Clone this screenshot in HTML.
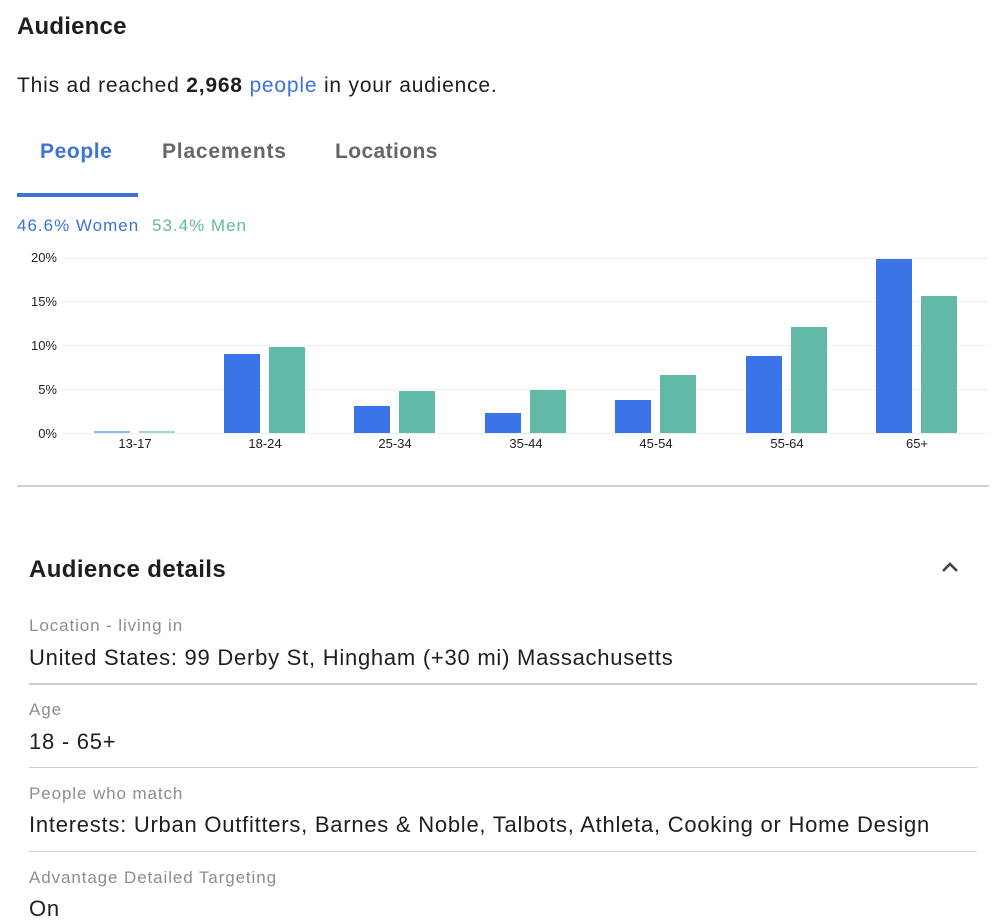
<!DOCTYPE html>
<html><head><meta charset="utf-8"><style>
body{margin:0;width:1004px;height:924px;background:#fff;font-family:"Liberation Sans",sans-serif;position:relative;overflow:hidden;color:#1c1e21}
.a{position:absolute;white-space:nowrap}
.g{position:absolute;height:1px;background:#eef0f2;left:62px;width:927px}
.b{position:absolute;width:36px}
.bl{background:#3b73e8}.gr{background:#62b9a6}
.x{position:absolute;font-size:13px;top:436px;width:60px;text-align:center}
.y{position:absolute;font-size:13px;left:0;width:57px;text-align:right}
.lab{position:absolute;left:29px;font-size:17px;color:#8a8d91;letter-spacing:0.9px;white-space:nowrap}
.val{position:absolute;left:29px;font-size:22px;color:#1c1e21;letter-spacing:0.75px;white-space:nowrap}
.hr{position:absolute;left:29px;width:948px;height:1px;background:#ccd0d5}
</style></head><body>
<div class="a" style="left:17px;top:13px;font-size:24px;font-weight:bold;letter-spacing:0.2px">Audience</div>
<div class="a" style="left:17px;top:74px;font-size:21px;letter-spacing:0.8px">This ad reached <b>2,968</b> <span style="color:#3b73d8">people</span> in your audience.</div>
<div class="a" style="left:40px;top:140px;font-size:21px;font-weight:bold;color:#3b73d8;letter-spacing:0.6px">People</div>
<div class="a" style="left:162px;top:140px;font-size:21px;font-weight:bold;color:#65676b;letter-spacing:0.8px">Placements</div>
<div class="a" style="left:335px;top:140px;font-size:21px;font-weight:bold;color:#65676b;letter-spacing:0.4px">Locations</div>
<div class="a" style="left:17px;top:193px;width:121px;height:4px;background:#3b73d8"></div>
<div class="a" style="left:17px;top:216px;font-size:17px;color:#3b73d8;letter-spacing:1px">46.6% Women</div>
<div class="a" style="left:152px;top:216px;font-size:17px;color:#62b9a6;letter-spacing:1px">53.4% Men</div>

<div class="g" style="top:258px"></div><div class="g" style="top:301px"></div><div class="g" style="top:345px"></div><div class="g" style="top:389px"></div><div class="g" style="top:433px"></div>
<div class="y" style="top:250px">20%</div><div class="y" style="top:294px">15%</div><div class="y" style="top:338px">10%</div><div class="y" style="top:382px">5%</div><div class="y" style="top:426px">0%</div>

<div class="b" style="left:94px;top:431px;height:2px;background:#9bb6ee"></div>
<div class="b" style="left:139px;top:431px;height:2px;background:#a7d7cc"></div>
<div class="b bl" style="left:224px;top:354px;height:79px"></div><div class="b gr" style="left:269px;top:347px;height:86px"></div>
<div class="b bl" style="left:354px;top:406px;height:27px"></div><div class="b gr" style="left:399px;top:391px;height:42px"></div>
<div class="b bl" style="left:485px;top:413px;height:20px"></div><div class="b gr" style="left:530px;top:390px;height:43px"></div>
<div class="b bl" style="left:615px;top:400px;height:33px"></div><div class="b gr" style="left:660px;top:375px;height:58px"></div>
<div class="b bl" style="left:746px;top:356px;height:77px"></div><div class="b gr" style="left:791px;top:327px;height:106px"></div>
<div class="b bl" style="left:876px;top:259px;height:174px"></div><div class="b gr" style="left:921px;top:296px;height:137px"></div>

<div class="x" style="left:105px">13-17</div><div class="x" style="left:235px">18-24</div><div class="x" style="left:365px">25-34</div><div class="x" style="left:496px">35-44</div><div class="x" style="left:626px">45-54</div><div class="x" style="left:757px">55-64</div><div class="x" style="left:887px">65+</div>

<div class="a" style="left:17px;top:485px;width:972px;height:2px;background:#ccd0d5"></div>

<div class="a" style="left:29px;top:556px;font-size:24px;font-weight:bold;letter-spacing:0.4px">Audience details</div>
<svg class="a" style="left:940px;top:560px" width="20" height="14" viewBox="0 0 20 14"><path d="M3 11 L10 4 L17 11" fill="none" stroke="#444" stroke-width="2.6"/></svg>

<div class="lab" style="top:616px">Location - living in</div>
<div class="val" style="top:645px">United States: 99 Derby St, Hingham (+30 mi) Massachusetts</div>
<div class="hr" style="top:683px;height:2px"></div>
<div class="lab" style="top:700px">Age</div>
<div class="val" style="top:729px">18 - 65+</div>
<div class="hr" style="top:767px"></div>
<div class="lab" style="top:784px">People who match</div>
<div class="val" style="top:812px">Interests: Urban Outfitters, Barnes &amp; Noble, Talbots, Athleta, Cooking or Home Design</div>
<div class="hr" style="top:851px"></div>
<div class="lab" style="top:868px">Advantage Detailed Targeting</div>
<div class="val" style="top:896px">On</div>
</body></html>
